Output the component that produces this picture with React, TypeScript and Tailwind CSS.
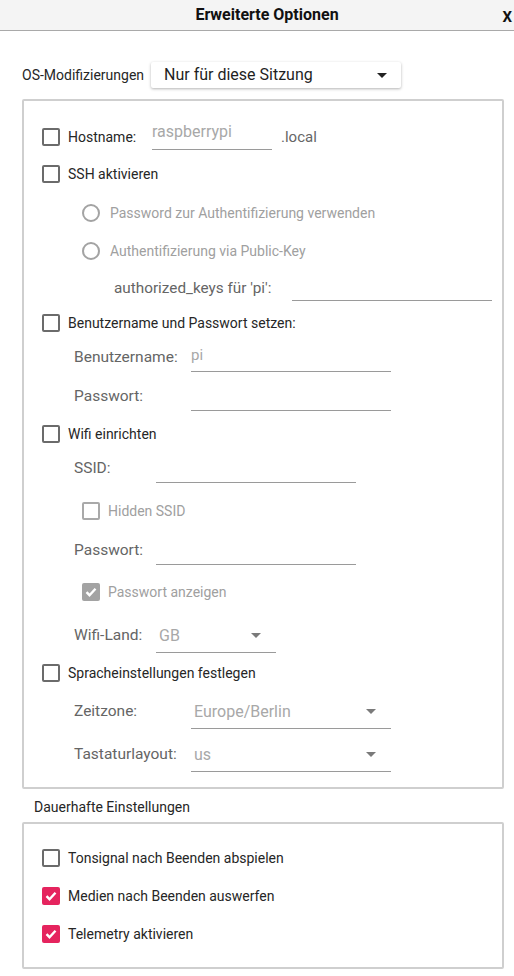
import React from "react";

const Check = ({ color = "white" }: { color?: string }) => (
  <svg width="14" height="14" viewBox="0 0 14 14">
    <path d="M2.5 7.2l3 3L11.5 3.8" fill="none" stroke={color} strokeWidth="2.4" />
  </svg>
);

function Box({ kind = "off" }: { kind?: "off" | "disabled" | "gray" | "pink" }) {
  if (kind === "pink")
    return (
      <div className="w-[18px] h-[18px] rounded-[2px] bg-[#e5245e] flex items-center justify-center shrink-0">
        <Check />
      </div>
    );
  if (kind === "gray")
    return (
      <div className="w-[18px] h-[18px] rounded-[2px] bg-[#a3a3a3] flex items-center justify-center shrink-0">
        <Check />
      </div>
    );
  return (
    <div
      className={
        "w-[18px] h-[18px] rounded-[2px] border-2 shrink-0 " +
        (kind === "disabled" ? "border-[#a9a9a9]" : "border-[#6b6b6b]")
      }
    />
  );
}

const Radio = () => <div className="w-[18px] h-[18px] rounded-full border-2 border-[#a3a3a3] shrink-0" />;

const Arrow = ({ color = "#7a7a7a" }: { color?: string }) => (
  <svg width="10" height="5" viewBox="0 0 10 5">
    <path d="M0 0h10L5 5z" fill={color} />
  </svg>
);

function CbRow({ label, mt, kind = "off" }: { label: string; mt: string; kind?: "off" | "pink" }) {
  return (
    <div className={"h-[26px] flex items-center pl-[18px] " + mt}>
      <Box kind={kind} />
      <span className="ml-[8px] text-[14px] text-[#262626]">{label}</span>
    </div>
  );
}

export default function App() {
  return (
    <div className="w-[514px] h-[976px] bg-white font-['Roboto',sans-serif] overflow-hidden">
      <div className="h-[31px] bg-[#f4f4f4] border-b border-[#a9a9a9] flex items-center relative">
        <div className="w-full text-center pl-[20px] text-[16px] font-bold text-[#111]">Erweiterte Optionen</div>
        <div className="absolute right-[2px] top-[6px] text-[15px] font-bold text-[#111]">X</div>
      </div>

      <div className="mt-[31px] h-[26px] flex items-center pl-[22px]">
        <span className="text-[14px] text-[#262626] w-[129px]">OS-Modifizierungen</span>
        <div className="w-[250px] h-[26px] bg-white rounded-[2px] shadow-[0_1px_3px_rgba(0,0,0,0.3)] flex items-center pl-[13px] pr-[14px] justify-between">
          <span className="text-[16px] text-[#1f1f1f]">Nur für diese Sitzung</span>
          <Arrow color="#222" />
        </div>
      </div>

      <div className="mt-[11px] ml-[22px] w-[482px] border-2 border-[#cfcfcf] rounded-[2px] pb-[15px]">
        <div className="mt-[23px] h-[26px] flex items-center pl-[18px]">
          <Box />
          <span className="ml-[8px] w-[84px] text-[14px] text-[#262626]">Hostname:</span>
          <div className="w-[120px] h-[36px] mb-[10px] border-b border-[#9a9a9a] flex items-center">
            <span className="text-[16px] text-[#a8a8a8]">raspberrypi</span>
          </div>
          <span className="ml-[9px] text-[15px] text-[#666]">.local</span>
        </div>
        <CbRow label="SSH aktivieren" mt="mt-[11px]" />
        <div className="mt-[13px] h-[26px] flex items-center pl-[58px]">
          <Radio />
          <span className="ml-[10px] text-[14px] text-[#a0a0a0]">Password zur Authentifizierung verwenden</span>
        </div>
        <div className="mt-[12px] h-[26px] flex items-center pl-[58px]">
          <Radio />
          <span className="ml-[10px] text-[14px] text-[#a0a0a0]">Authentifizierung via Public-Key</span>
        </div>
        <div className="mt-[11px] h-[26px] flex items-center pl-[90px]">
          <span className="w-[178px] text-[15.3px] text-[#656565]">authorized_keys für 'pi':</span>
          <div className="w-[200px] h-[24px] mt-[2px] border-b border-[#9a9a9a]" />
        </div>
        <CbRow label="Benutzername und Passwort setzen:" mt="mt-[9px]" />
        <div className="mt-[8px] h-[28px] flex items-center pl-[50px]">
          <span className="w-[117px] text-[15.5px] text-[#656565]">Benutzername:</span>
          <div className="w-[200px] h-[28px] border-b border-[#9a9a9a] flex items-center">
            <span className="text-[15px] text-[#a8a8a8] -mt-[4px]">pi</span>
          </div>
        </div>
        <div className="mt-[11px] h-[28px] flex items-center pl-[50px]">
          <span className="w-[117px] text-[15.5px] text-[#656565]">Passwort:</span>
          <div className="w-[200px] h-[28px] border-b border-[#9a9a9a]" />
        </div>
        <CbRow label="Wifi einrichten" mt="mt-[10px]" />
        <div className="mt-[8px] h-[28px] flex items-center pl-[50px]">
          <span className="w-[82px] text-[15.5px] text-[#656565]">SSID:</span>
          <div className="w-[200px] h-[28px] border-b border-[#9a9a9a]" />
        </div>
        <div className="mt-[15px] h-[26px] flex items-center pl-[58px]">
          <Box kind="disabled" />
          <span className="ml-[8px] text-[14px] text-[#a0a0a0]">Hidden SSID</span>
        </div>
        <div className="mt-[13px] h-[28px] flex items-center pl-[50px]">
          <span className="w-[82px] text-[15.5px] text-[#656565]">Passwort:</span>
          <div className="w-[200px] h-[28px] border-b border-[#9a9a9a]" />
        </div>
        <div className="mt-[14px] h-[26px] flex items-center pl-[58px]">
          <Box kind="gray" />
          <span className="ml-[8px] text-[14px] text-[#a0a0a0]">Passwort anzeigen</span>
        </div>
        <div className="mt-[14px] h-[34px] flex items-center pl-[50px]">
          <span className="w-[82px] text-[15.5px] text-[#656565]">Wifi-Land:</span>
          <div className="w-[120px] h-[34px] border-b border-[#9a9a9a] flex items-center justify-between pl-[3px] pr-[15px]">
            <span className="text-[16px] text-[#a8a8a8]">GB</span>
            <Arrow />
          </div>
        </div>
        <CbRow label="Spracheinstellungen festlegen" mt="mt-[7px]" />
        <div className="mt-[9px] h-[34px] flex items-center pl-[50px]">
          <span className="w-[117px] text-[15.5px] text-[#656565]">Zeitzone:</span>
          <div className="w-[200px] h-[34px] border-b border-[#9a9a9a] flex items-center justify-between pl-[3px] pr-[15px]">
            <span className="text-[16px] text-[#a8a8a8]">Europe/Berlin</span>
            <Arrow />
          </div>
        </div>
        <div className="mt-[9px] h-[34px] flex items-center pl-[50px]">
          <span className="w-[117px] text-[15.5px] text-[#656565]">Tastaturlayout:</span>
          <div className="w-[200px] h-[34px] border-b border-[#9a9a9a] flex items-center justify-between pl-[3px] pr-[15px]">
            <span className="text-[16px] text-[#a8a8a8]">us</span>
            <Arrow />
          </div>
        </div>
      </div>

      <div className="mt-[8px] h-[20px] flex items-center pl-[34px] text-[14px] text-[#262626]">Dauerhafte Einstellungen</div>

      <div className="mt-[5px] ml-[22px] w-[482px] border-2 border-[#cfcfcf] rounded-[2px] pt-[21px] pb-[20px]">
        <CbRow label="Tonsignal nach Beenden abspielen" mt="mt-0" />
        <CbRow label="Medien nach Beenden auswerfen" mt="mt-[12px]" kind="pink" />
        <CbRow label="Telemetry aktivieren" mt="mt-[12px]" kind="pink" />
      </div>
    </div>
  );
}
